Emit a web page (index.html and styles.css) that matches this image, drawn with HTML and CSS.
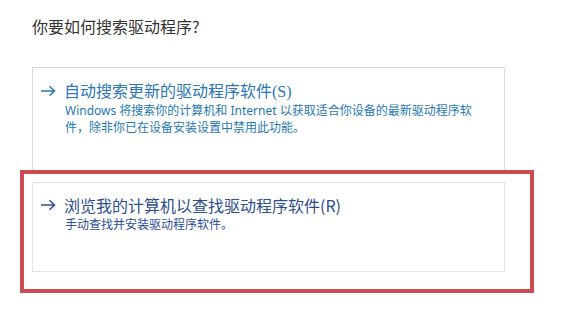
FILE: index.html
```html
<!DOCTYPE html>
<html lang="zh-CN">
<head>
<meta charset="utf-8">
<link rel="stylesheet" href="styles.css">
</head>
<body>
<div class="page">
  <h1 class="title">你要如何搜索驱动程序?</h1>
  <div class="option option-auto">
    <div class="option-head">
      <svg class="arrow" width="16" height="12" viewBox="0 0 16 12"><path d="M1 6H14.5M9.5 1.2L14.5 6L9.5 10.8" fill="none" stroke="currentColor" stroke-width="1.5"/></svg>
      <span class="option-title">自动搜索更新的驱动程序软件<span class="accel">(S)</span></span>
    </div>
    <p class="option-desc">Windows 将搜索你的计算机和 Internet 以获取适合你设备的最新驱动程序软<br>件，除非你已在设备安装设置中禁用此功能。</p>
  </div>
  <div class="highlight-wrap">
    <div class="option option-browse">
      <div class="option-head">
        <svg class="arrow" width="16" height="12" viewBox="0 0 16 12"><path d="M1 6H14.5M9.5 1.2L14.5 6L9.5 10.8" fill="none" stroke="currentColor" stroke-width="1.5"/></svg>
        <span class="option-title">浏览我的计算机以查找驱动程序软件(R)</span>
      </div>
      <p class="option-desc">手动查找并安装驱动程序软件。</p>
    </div>
    <div class="red-frame"></div>
  </div>
</div>
</body>
</html>
```

FILE: styles.css
```css
html, body {
  margin: 0;
  padding: 0;
  background: #ffffff;
}

body {
  font-family: "Noto Sans", "Noto Sans CJK SC", sans-serif;
  height: 328px;
}

.page {
  padding: 16px 0 0 32px;
  width: 473px;
}

.title {
  margin: 0 0 31px 0;
  font-size: 16px;
  line-height: 20px;
  font-weight: normal;
  color: #333333;
  font-family: "Noto Sans CJK SC", sans-serif;
}

.option {
  box-sizing: border-box;
  border: 1px solid #d6dce3;
  background: #ffffff;
}

.option-auto {
  height: 105px;
  padding: 13px 0 0 7px;
}

.option-browse {
  height: 90px;
  padding: 12px 0 0 7px;
  border-color: #e2e4e7;
}

.highlight-wrap {
  position: relative;
  margin-top: 10px;
}

.option-head {
  display: flex;
  align-items: center;
  height: 20px;
}

.arrow {
  flex: none;
  margin-right: 8px;
}

.option-title {
  font-family: "Noto Sans CJK SC", sans-serif;
  font-size: 16px;
  line-height: 20px;
  white-space: nowrap;
}

.option-auto .option-head {
  color: #2b75b8;
}

.option-browse .option-head {
  color: #2d4f8e;
}

.accel {
  font-family: "Liberation Serif", serif;
}

.option-desc {
  margin: 1px 0 0 25px;
  width: 430px;
  font-family: "Noto Sans", "Noto Sans CJK SC", sans-serif;
  font-size: 12px;
  line-height: 17px;
}

.option-auto .option-desc {
  color: #1f78b4;
}

.option-browse .option-desc {
  color: #2a4f9c;
}

.red-frame {
  position: absolute;
  top: -12px;
  left: -12px;
  width: 514px;
  height: 123px;
  border: 4px solid #cc4b50;
  box-sizing: border-box;
  pointer-events: none;
}
```
